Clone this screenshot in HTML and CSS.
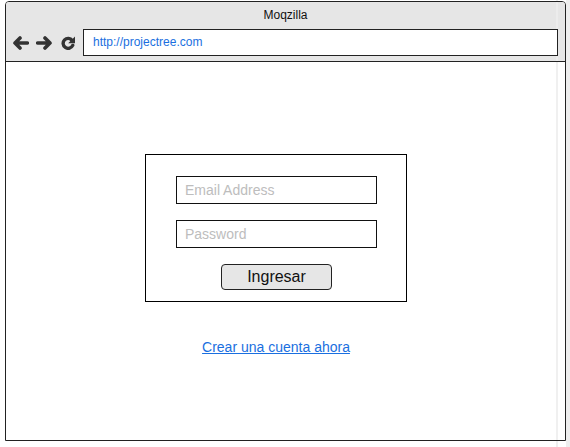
FILE: index.html
```html
<!DOCTYPE html>
<html lang="es">
<head>
<meta charset="utf-8">
<title>Moqzilla</title>
<link rel="stylesheet" href="styles.css">
</head>
<body>
<div class="frame">
  <div class="titlebar">
    <div class="title">Moqzilla</div>
    <div class="toolbar">
      <svg class="icon" width="17" height="14" viewBox="0 0 17 14" aria-hidden="true">
        <path d="M15.3 7 H3 M8 2 L3 7 L8 12" fill="none" stroke="#333" stroke-width="3.6" stroke-linecap="round" stroke-linejoin="round"/>
      </svg>
      <svg class="icon" width="17" height="14" viewBox="0 0 17 14" aria-hidden="true">
        <path d="M1.7 7 H14 M9 2 L14 7 L9 12" fill="none" stroke="#333" stroke-width="3.6" stroke-linecap="round" stroke-linejoin="round"/>
      </svg>
      <svg class="icon reload" width="16" height="14" viewBox="0 0 16 14" aria-hidden="true">
        <path d="M12.2 4.4 A5 5 0 1 0 12.7 9.4" fill="none" stroke="#333" stroke-width="3.4" stroke-linecap="round"/>
        <polygon points="15,0.4 15,7.2 8.2,7.2" fill="#333"/>
      </svg>
      <div class="address">http://projectree.com</div>
    </div>
  </div>
  <div class="content">
    <div class="login-wrap">
      <form class="login-box">
        <input class="field" type="text" placeholder="Email Address">
        <input class="field" type="password" placeholder="Password">
        <button class="btn" type="button">Ingresar</button>
      </form>
      <div class="link-row"><a class="link" href="#">Crear una cuenta ahora</a></div>
    </div>
  </div>
</div>
</body>
</html>
```
FILE: styles.css
```css
html, body {
  margin: 0;
  padding: 0;
}
body {
  width: 570px;
  height: 447px;
  overflow: hidden;
  font-family: "Liberation Sans", Arial, sans-serif;
  background: linear-gradient(to right, #fff 0 556px, #efefef 556px 558px, #fff 558px 566px, #eeeeee 566px);
}
.frame {
  margin: 1px 0 0 5px;
  width: 561px;
  height: 440px;
  box-sizing: border-box;
  border: 1px solid #222;
  border-radius: 4px 4px 0 0;
  display: flex;
  flex-direction: column;
  overflow: hidden;
}
.titlebar {
  height: 59px;
  border-bottom: 1px solid #222;
  background: linear-gradient(to right, #e6e6e6 0 550px, #ececec 550px 552px, #e6e6e6 552px);
  flex: none;
}
.title {
  padding-top: 5px;
  height: 16px;
  line-height: 16px;
  font-size: 12px;
  color: #111;
  text-align: center;
}
.toolbar {
  margin-top: 6px;
  padding-left: 6px;
  display: flex;
  align-items: center;
  gap: 7px;
  height: 27px;
}
.icon {
  flex: none;
  display: block;
}
.address {
  box-sizing: border-box;
  width: 475px;
  height: 27px;
  border: 1px solid #222;
  background: #fff;
  padding-left: 9px;
  font-size: 12px;
  line-height: 25px;
  color: #1a6fe0;
}
.content {
  flex: 1;
  background: linear-gradient(to right, #fff 0 550px, #f0f0f0 550px 552px, #fff 552px);
  padding: 92px 0 0 139px;
}
.login-wrap {
  width: 262px;
}
.login-box {
  margin: 0;
  box-sizing: border-box;
  width: 262px;
  border: 1px solid #000;
  padding: 21px 29px 11px 30px;
  display: flex;
  flex-direction: column;
}
.field {
  box-sizing: border-box;
  width: 201px;
  height: 28px;
  margin: 0 0 16px 0;
  border: 1px solid #111;
  border-radius: 0;
  padding: 0 8px;
  font-family: "Liberation Sans", Arial, sans-serif;
  font-size: 14px;
  color: #333;
  background: #fff;
  outline: none;
}
.field::placeholder {
  color: #bdbdbd;
}
.btn {
  box-sizing: border-box;
  align-self: center;
  width: 111px;
  height: 26px;
  margin: 0;
  padding: 0;
  border: 1px solid #222;
  border-radius: 4px;
  background: #e6e6e6;
  font-family: "Liberation Sans", Arial, sans-serif;
  font-size: 16px;
  color: #111;
}
.link-row {
  margin-top: 37px;
  text-align: center;
  line-height: 16px;
}
.link {
  font-size: 14px;
  color: #1a6fe0;
  text-decoration: underline;
}
```
